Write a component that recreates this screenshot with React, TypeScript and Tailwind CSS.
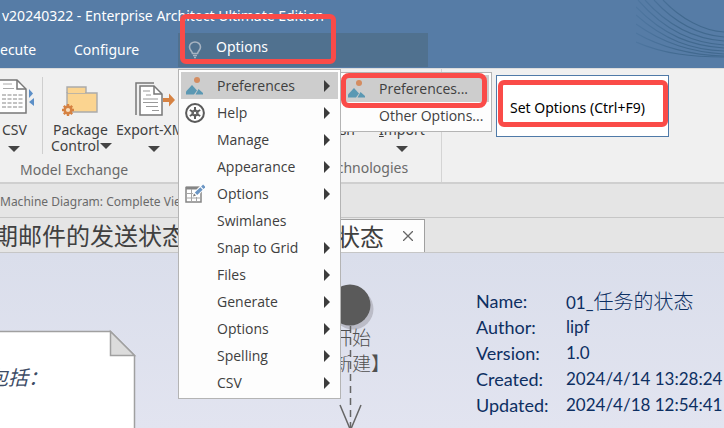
import React from "react";

const UI_FONT = "font-['Open_Sans','Noto_Sans_CJK_SC',sans-serif]";
const SANS_FONT = "font-['Noto_Sans','Noto_Sans_CJK_SC',sans-serif]";

type IconName = "picture" | "help" | "edit";

function PictureIcon() {
  return (
    <svg width="20" height="20" viewBox="0 0 20 20" aria-hidden="true" className="shrink-0">
      <circle cx="12" cy="4" r="3" fill="#d48c60" />
      <path d="M1 18.500V15.500L7 9l5 5.500-3 4z" fill="#5b98b3" />
      <path d="M10.500 18.500 13.500 13l4.500 4v1.500z" fill="#5b98b3" />
    </svg>
  );
}

function HelpIcon() {
  return (
    <svg width="20" height="20" viewBox="0 0 20 20" aria-hidden="true" className="shrink-0" fill="none" stroke="#5a5a5a">
      <circle cx="10" cy="10" r="8.900" strokeWidth="2" />
      <path d="M10 4v12M4.800 7l10.400 6M15.200 7 4.800 13" strokeWidth="2" />
      <circle cx="10" cy="10" r="3" strokeWidth="1.200" />
      <circle cx="10" cy="10" r="1.200" fill="#fdfdfd" stroke="none" />
    </svg>
  );
}

function EditIcon() {
  return (
    <svg width="20" height="20" viewBox="0 0 20 20" aria-hidden="true" className="shrink-0" fill="none">
      <path d="M1 3.500h15V18H1z" fill="#fff" stroke="#858585" strokeWidth="1.500" />
      <path d="M1 4h15" stroke="#858585" strokeWidth="3" />
      <path d="M1 9.500h15M1 14h15M6.500 5v13M11.500 5v13" stroke="#a5a5a5" />
      <path d="m7 13 1-4 8-8 4 3-8 9z" fill="#fff" />
      <path d="m11 9.800 5.500-5.300" stroke="#6c96c4" strokeWidth="3.400" />
      <path d="m17.300 3.700 2-2" stroke="#6c96c4" strokeWidth="3.400" />
      <path d="m8 12.500 1-3 2 2z" fill="#777" />
    </svg>
  );
}

function MenuIcon({ name }: { name?: IconName }) {
  if (name === "picture") return <PictureIcon />;
  if (name === "help") return <HelpIcon />;
  if (name === "edit") return <EditIcon />;
  return <span className="w-5 shrink-0" />;
}

const menuItems: { label: string; icon?: IconName; more: boolean }[] = [
  { label: "Preferences", icon: "picture", more: true },
  { label: "Help", icon: "help", more: true },
  { label: "Manage", more: true },
  { label: "Appearance", more: true },
  { label: "Options", icon: "edit", more: true },
  { label: "Swimlanes", more: false },
  { label: "Snap to Grid", more: true },
  { label: "Files", more: true },
  { label: "Generate", more: true },
  { label: "Options", more: true },
  { label: "Spelling", more: true },
  { label: "CSV", more: true },
];

const details = [
  { name: "Name:", value: "01_", title: "任务的状态" },
  { name: "Author:", value: "lipf" },
  { name: "Version:", value: "1.0" },
  { name: "Created:", value: "2024/4/14 13:28:24" },
  { name: "Updated:", value: "2024/4/18 12:54:41" },
];

function DownArrow() {
  return (
    <svg width="12" height="6" viewBox="0 0 12 6" aria-hidden="true" className="shrink-0">
      <path d="M0 0h12L6 6z" fill="#444" />
    </svg>
  );
}

function CsvIcon() {
  return (
    <svg width="38" height="36" viewBox="0 0 38 36" aria-hidden="true" fill="none">
      <path d="M3 2h18l9 9v24H3z" fill="#fff" stroke="#777" strokeWidth="1.500" />
      <path d="M21 2v9h9" stroke="#777" strokeWidth="1.500" />
      <path d="M7 6h9M7 10.500h11" stroke="#aaa" />
      <path d="M6 17h21M6 21h21M6 25h21M6 29h21" stroke="#888" strokeWidth="1.200" strokeDasharray="4 1.500" />
      <path d="m33 11 4 4.500-4 4.500z" fill="#5c8fc7" />
      <path d="m38 20-5 4 5 4z" fill="#5c8fc7" />
    </svg>
  );
}

function PackageIcon() {
  return (
    <svg width="38" height="36" viewBox="0 0 38 36" aria-hidden="true" fill="none">
      <path d="M6 12V6h19v6" fill="#fbd490" stroke="#aaa" strokeWidth="1.400" />
      <path d="M6 12h30v19H6z" fill="#fbd490" stroke="#aaa" strokeWidth="1.400" />
      <path d="M7 11.500h17" stroke="#fbd490" />
      <path d="M7 23v12M1 29h12M2.800 24.800l8.400 8.400M11.200 24.800l-8.400 8.400" stroke="#d68242" strokeWidth="2.400" />
      <circle cx="7" cy="29" r="3.300" fill="#f7e0c0" stroke="#d68242" strokeWidth="2.400" />
    </svg>
  );
}

function ExportIcon() {
  return (
    <svg width="40" height="36" viewBox="0 0 40 36" aria-hidden="true" fill="none">
      <path d="M1 34V2h18" stroke="#777" strokeWidth="1.500" />
      <path d="M5 5h14l8 8v21H5z" fill="#fff" stroke="#777" strokeWidth="1.500" />
      <path d="M19 5v8h8" stroke="#777" strokeWidth="1.500" />
      <path d="M8 10h7M11 14h5M8 18h15M8 21.500h15M11 25.500h12M17 29.500h7" stroke="#999" strokeWidth="1.200" />
      <path d="M28 17h6v-4.500l6 6.500-6 6.500V21h-6z" fill="#d68242" />
    </svg>
  );
}

function HeaderCurves() {
  const lines = [
    "M27 0C45 19 68 31 88 32",
    "M18 0C40 24 64 35 88 37",
    "M9 0C34 28 60 39 88 41",
    "M2 0C30 32 58 43 88 45",
    "M0 7C28 36 56 46 88 48",
    "M0 15C28 40 56 50 88 51",
    "M0 24C28 44 56 52 88 54",
    "M0 33C28 49 56 55 88 56",
    "M0 42C28 54 56 57 88 57",
  ];
  return (
    <svg width="88" height="60" viewBox="0 0 88 60" aria-hidden="true" className="absolute top-0 right-0">
      <defs>
        <linearGradient id="fade" gradientUnits="userSpaceOnUse" x1="0" x2="88" y1="0" y2="0">
          <stop offset="0" stopColor="#456f99" stopOpacity="0.500" />
          <stop offset="0.500" stopColor="#41698f" />
        </linearGradient>
      </defs>
      {lines.map((d) => (
        <path key={d} d={d} fill="none" stroke="url(#fade)" strokeWidth="1.200" />
      ))}
    </svg>
  );
}

function Header() {
  return (
    <header className={`relative h-[68px] overflow-hidden bg-[#567ca6] text-white ${SANS_FONT}`}>
      <HeaderCurves />
      <h1 className="h-[33px] pl-0.5 whitespace-nowrap text-sm leading-8">v20240322 - Enterprise Architect Ultimate Edition</h1>
      <nav className="flex h-[34px] items-stretch text-sm">
        <button className="w-[74px] text-left">ecute</button>
        <button className="w-[104px] text-left">Configure</button>
        <label className="flex w-[250px] items-start bg-[#50718f] pl-2.5">
          <svg width="14" height="18" viewBox="0 0 14 18" aria-hidden="true" className="mt-2 mr-3.5" fill="none" stroke="#a6b3c1" strokeWidth="1.600">
            <path d="M4.500 12.500C4 10 1.500 9 1.500 6a5.500 5 0 0 1 11 0c0 3-2.500 4-3 6.500z" />
            <path d="M5 14.500h4M6 16.500h2" />
          </svg>
          <input
            type="text"
            aria-label="Search commands"
            defaultValue="Options"
            className="h-[26px] w-32 bg-transparent text-sm text-white outline-none"
          />
        </label>
      </nav>
    </header>
  );
}

function Ribbon() {
  return (
    <section className={`flex h-[116px] overflow-hidden border-t border-b-2 border-t-[#dcdcdc] border-b-[#cfcfcf] bg-[#f0f0f0] text-sm leading-4 text-[#404040] ${SANS_FONT}`}>
      <div className="w-[180px] shrink-0">
        <div className="flex pt-2">
          <button className="-ml-1 flex w-[47px] shrink-0 flex-col items-start border-r border-[#cfcfcf] pt-px">
            <CsvIcon />
            <span className="mt-2 ml-1.5">CSV</span>
            <span className="mt-2 ml-3"><DownArrow /></span>
          </button>
          <button className="flex w-[73px] shrink-0 flex-col items-start pt-1 pl-2 text-left">
            <span className="ml-2.5"><PackageIcon /></span>
            <span className="mt-[5px] ml-0.5">Package</span>
            <span className="flex items-center">Control<DownArrow /></span>
          </button>
          <button className="flex w-[90px] shrink-0 flex-col items-start pt-1 whitespace-nowrap">
            <span className="ml-[19px]"><ExportIcon /></span>
            <span className="mt-[5px]">Export-XMI</span>
            <span className="mt-2 ml-8"><DownArrow /></span>
          </button>
        </div>
        <p className="mt-2 pl-5 text-[#6a6a6a]">Model Exchange</p>
      </div>
      <div className="ml-[142px] flex w-[120px] shrink-0 flex-col border-r border-[#d4d4d4]">
        <div className="flex items-start pt-[53px]">
          <button className="w-[57px] pr-6 text-right">sh</button>
          <button className="flex flex-col items-center gap-2"><span><u>I</u>mport</span><DownArrow /></button>
        </div>
        <p className="mt-2 text-[#6a6a6a]">Technologies</p>
      </div>
    </section>
  );
}

function Menu() {
  return (
    <div role="menu" className="absolute top-[69px] left-[178px] w-[163px] border border-[#b4b4b4] bg-[#fdfdfd] p-0.5">
      {menuItems.map((item, i) => (
        <button
          key={i}
          role="menuitem"
          className={`flex h-[27px] w-full items-center gap-3 pr-2 pl-1 text-left text-sm text-[#404040] ${i === 0 ? "bg-[#cdcdcd]" : ""}`}
        >
          <MenuIcon name={item.icon} />
          <span className="flex-1 whitespace-nowrap">{item.label}</span>
          {item.more && (
            <svg width="6" height="12" viewBox="0 0 6 12" aria-hidden="true"><path d="M0 0v12l6-6z" fill="#3c3c3c" /></svg>
          )}
        </button>
      ))}
    </div>
  );
}

function Submenu() {
  return (
    <div role="menu" className="absolute top-[72px] left-[340px] w-[152px] border border-[#b4b4b4] bg-[#fdfdfd] p-0.5">
      {["Preferences...", "Other Options..."].map((label, i) => (
        <button
          key={label}
          role="menuitem"
          className={`flex h-[27px] w-full items-center gap-3 pl-1 text-left text-sm whitespace-nowrap text-[#404040] ${i === 0 ? "bg-[#cdcdcd]" : ""}`}
        >
          <MenuIcon name={i === 0 ? "picture" : undefined} />
          {label}
        </button>
      ))}
    </div>
  );
}

function Canvas() {
  return (
    <main className="relative min-h-[175px] flex-1 overflow-hidden bg-gradient-to-b from-[#dadeeb] to-[#e2e4f0]">
      <svg width="400" height="175" viewBox="0 0 400 175" aria-hidden="true" className="absolute top-0 left-0" fill="none">
        <path d="M-5 78.500h115.500l24 24V180H-5z" fill="#fff" stroke="#a0a0a0" strokeWidth="1.500" />
        <path d="M110.500 78.500v24h24z" fill="#dcdcdc" stroke="#a0a0a0" strokeWidth="1.500" />
        <circle cx="353" cy="56" r="20.500" fill="#bbbcc7" />
        <circle cx="350" cy="52" r="20.500" fill="#5a5a5a" />
        <path d="M350.500 73v102" stroke="#666" strokeWidth="1.500" strokeDasharray="7 5" />
        <path d="m340 152 10.500 25L361 152" stroke="#666" strokeWidth="1.500" />
      </svg>
      <p className="absolute top-[110px] -left-3 font-['Noto_Sans_CJK_SC',sans-serif] text-xl leading-7 text-[#3d4c66] italic">包括：</p>
      <p className="absolute top-[71px] left-[312px] w-20 text-center font-['Noto_Sans_CJK_SC',sans-serif] text-[19px] leading-[26px] font-light whitespace-nowrap text-[#505050]">
        开始<br />【新建】
      </p>
      <dl className="absolute top-[35px] left-[476px] grid grid-cols-[90px_auto] font-['Lato','Noto_Sans_CJK_SC',sans-serif] text-lg leading-[26px] whitespace-nowrap text-[#0d2f62]">
        {details.map((row) => (
          <React.Fragment key={row.name}>
            <dt>{row.name}</dt>
            <dd className="h-[26px] text-[17px]">
              {row.value}
              {row.title && <span className="text-xl leading-[26px] font-light">{row.title}</span>}
            </dd>
          </React.Fragment>
        ))}
      </dl>
    </main>
  );
}

export default function App() {
  return (
    <div className={`relative flex min-h-screen flex-col overflow-hidden ${UI_FONT}`}>
      <Header />
      <Ribbon />
      <div className={`h-[33px] overflow-hidden bg-[#e5e5e5] text-xs leading-9 whitespace-nowrap text-[#6a6a6a] ${SANS_FONT}`}>
        <span>Machine Diagram: Complete View</span>
      </div>
      <div role="tablist" className="flex h-9 items-stretch overflow-hidden border-t border-b border-[#c6c6c6] bg-[#e5e5e5] text-2xl text-[#404040]">
        <button role="tab" className="-ml-1.5 w-[210px] shrink-0 pt-0.5 text-left whitespace-nowrap">期邮件的发送状态</button>
        <div className="mt-px flex w-[221px] shrink-0 items-center justify-end gap-[18px] border border-b-0 border-[#a0a0a0] bg-[#fdfdfd] pr-2.5">
          <button role="tab" aria-selected="true" className="pt-0.5 whitespace-nowrap">状态</button>
          <button aria-label="Close tab" className="p-px">
            <svg width="10" height="10" viewBox="0 0 10 10" aria-hidden="true" stroke="#666" strokeWidth="1.300"><path d="m0 0 10 10M10 0 0 10" /></svg>
          </button>
        </div>
      </div>
      <Canvas />
      <Menu />
      <Submenu />
      <div role="tooltip" className={`absolute top-[75px] left-[496px] h-[62px] w-[173px] border border-[#4f7aa8] bg-white pt-6 pl-[13px] text-sm leading-4 whitespace-nowrap text-black ${SANS_FONT}`}>
        Set Options (Ctrl+F9)
      </div>
      <div className="pointer-events-none absolute top-[14px] left-[180px] h-[50px] w-[156px] rounded-md border-[5px] border-[#fa4b48]" />
      <div className="pointer-events-none absolute top-[73px] left-[341px] h-[35px] w-[146px] rounded-lg border-[5px] border-[#fa4b48]" />
      <div className="pointer-events-none absolute top-[80px] left-[498px] h-[47px] w-[170px] rounded-md border-[5px] border-[#fa4b48]" />
    </div>
  );
}
